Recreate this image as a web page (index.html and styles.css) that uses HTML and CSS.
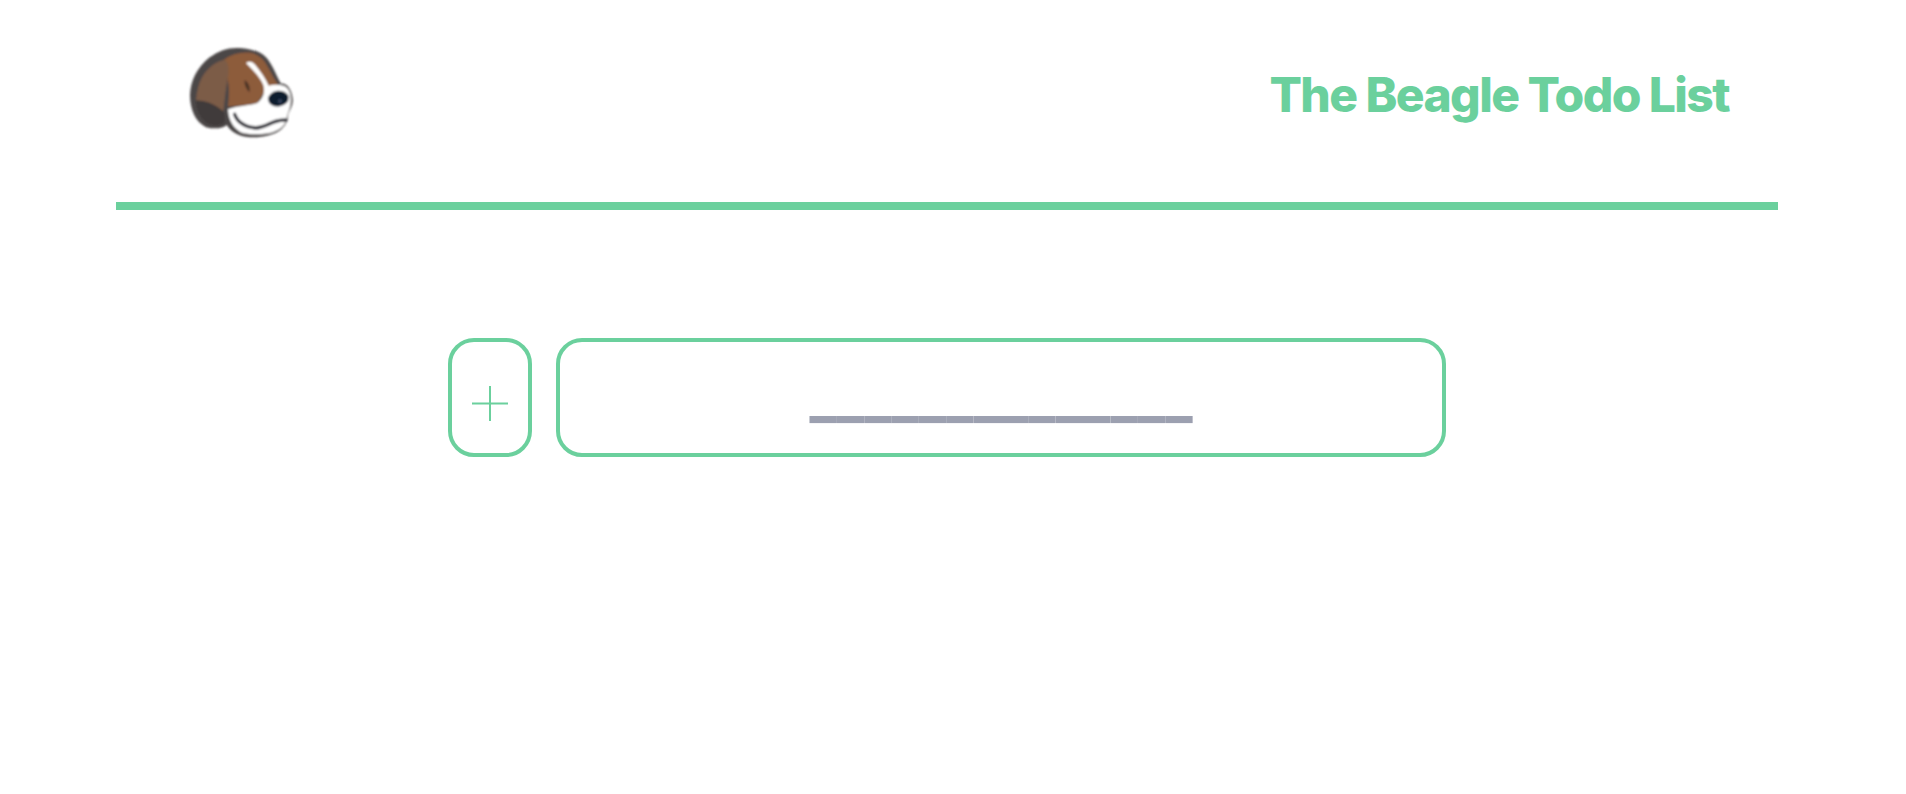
FILE: index.html
```html
<!DOCTYPE html>
<html lang="en">
<head>
    <meta charset="UTF-8">
    <title>The Beagle Todo List</title>
    <link rel="stylesheet" href="styles.css">
</head>
<body>
<div id="page">
    <header id="header">
        <svg class="logo" viewBox="0 0 336 294" width="112" height="98" aria-label="Beagle logo">
            <defs>
                <filter id="soft" x="-5%" y="-5%" width="110%" height="110%"><feGaussianBlur stdDeviation="2.6"/></filter>
            </defs>
            <g filter="url(#soft)" transform="translate(0 -1.3) scale(1 1.07)">
                <!-- head outline -->
                <path d="M12 150C14 110 32 74 70 45C100 24 130 16 160 18C195 20 225 28 240 44C258 62 268 90 285 118C300 116 316 130 320 160C322 178 312 190 306 205C306 222 298 238 280 250C255 266 205 274 165 264C145 258 130 246 122 234C112 244 84 246 60 240C28 226 12 190 12 150Z" fill="#4b4646"/>
                <!-- skull -->
                <path d="M100 62C125 38 160 28 190 31C215 34 230 46 240 62C252 80 260 98 276 120L240 135L214 172C190 178 150 180 126 182C130 140 135 100 100 62Z" fill="#8d5b3b"/>
                <!-- ear -->
                <path d="M118 52C96 52 66 72 48 100C38 118 32 140 30 165C60 165 90 178 112 196C116 170 118 140 124 110C130 85 130 65 118 52Z" fill="#7c5c46"/>
                <path d="M30 165C30 190 42 214 66 230C82 236 100 236 114 228C118 215 116 205 112 196C90 178 60 165 30 165Z" fill="#3f3a3a"/>
                <!-- white blaze and muzzle -->
                <path d="M180 60C190 54 200 56 208 66C224 84 238 104 248 124C262 120 280 120 296 125C310 132 316 150 314 170C312 190 304 200 302 214C300 232 284 246 260 254C226 262 190 262 164 254C142 242 128 222 126 190C150 180 190 180 214 172C232 160 238 140 232 122C224 100 198 78 180 60Z" fill="#fff"/>
                <!-- mouth -->
                <path d="M146 204C154 226 178 240 208 242C232 243 252 228 268 224C280 220 292 220 300 220" fill="none" stroke="#33333a" stroke-width="10" stroke-linecap="round"/>
                <!-- nose -->
                <ellipse cx="277" cy="160" rx="31" ry="22" transform="rotate(-6 277 160)" fill="#101a2e"/>
                <circle cx="282" cy="167" r="6" fill="#33405a"/>
                <!-- eye -->
                <path d="M176 108C186 114 194 128 190 142C182 134 174 122 176 108Z" fill="#4a3326"/>
            </g>
        </svg>
        <h1 class="title">The Beagle Todo List</h1>
    </header>
    <form id="add-form">
        <button type="button" class="add-btn" aria-label="Add">
            <svg viewBox="0 0 36 35" width="36" height="35">
                <path d="M0 17.5H36M18 0V35" fill="none" stroke="#6bd09d" stroke-width="2"/>
            </svg>
        </button>
        <input class="todo-input" type="text" placeholder="______________">
    </form>
</div>
</body>
</html>
```

FILE: styles.css
```css
* {
    margin: 0;
    padding: 0;
    box-sizing: border-box;
}

body {
    background: #fff;
    font-family: Inter, "Liberation Sans", sans-serif;
}

#page {
    width: 1662px;
    margin-left: 116px;
}

#header {
    display: flex;
    justify-content: space-between;
    align-items: flex-start;
    height: 210px;
    padding: 42px 49px 0 70px;
    border-bottom: 8px solid #6bd09d;
}

.title {
    margin-top: 23px;
    font-size: 48px;
    font-weight: 800;
    letter-spacing: -0.033em;
    color: #6bd09d;
}

#add-form {
    display: flex;
    justify-content: center;
    gap: 24px;
    margin-top: 128px;
}

.add-btn {
    display: flex;
    align-items: center;
    justify-content: center;
    width: 84px;
    height: 119px;
    padding-top: 12px;
    border: 4px solid #6bd09d;
    border-radius: 26px;
    background: #fff;
}

.todo-input {
    width: 890px;
    height: 119px;
    padding: 0 24px 4px;
    border: 4px solid #6bd09d;
    border-radius: 26px;
    font-family: inherit;
    font-size: 56.5px;
    font-weight: 800;
    text-align: center;
    outline: none;
}

.todo-input::placeholder {
    color: #9ca0b0;
    opacity: 1;
}
```
